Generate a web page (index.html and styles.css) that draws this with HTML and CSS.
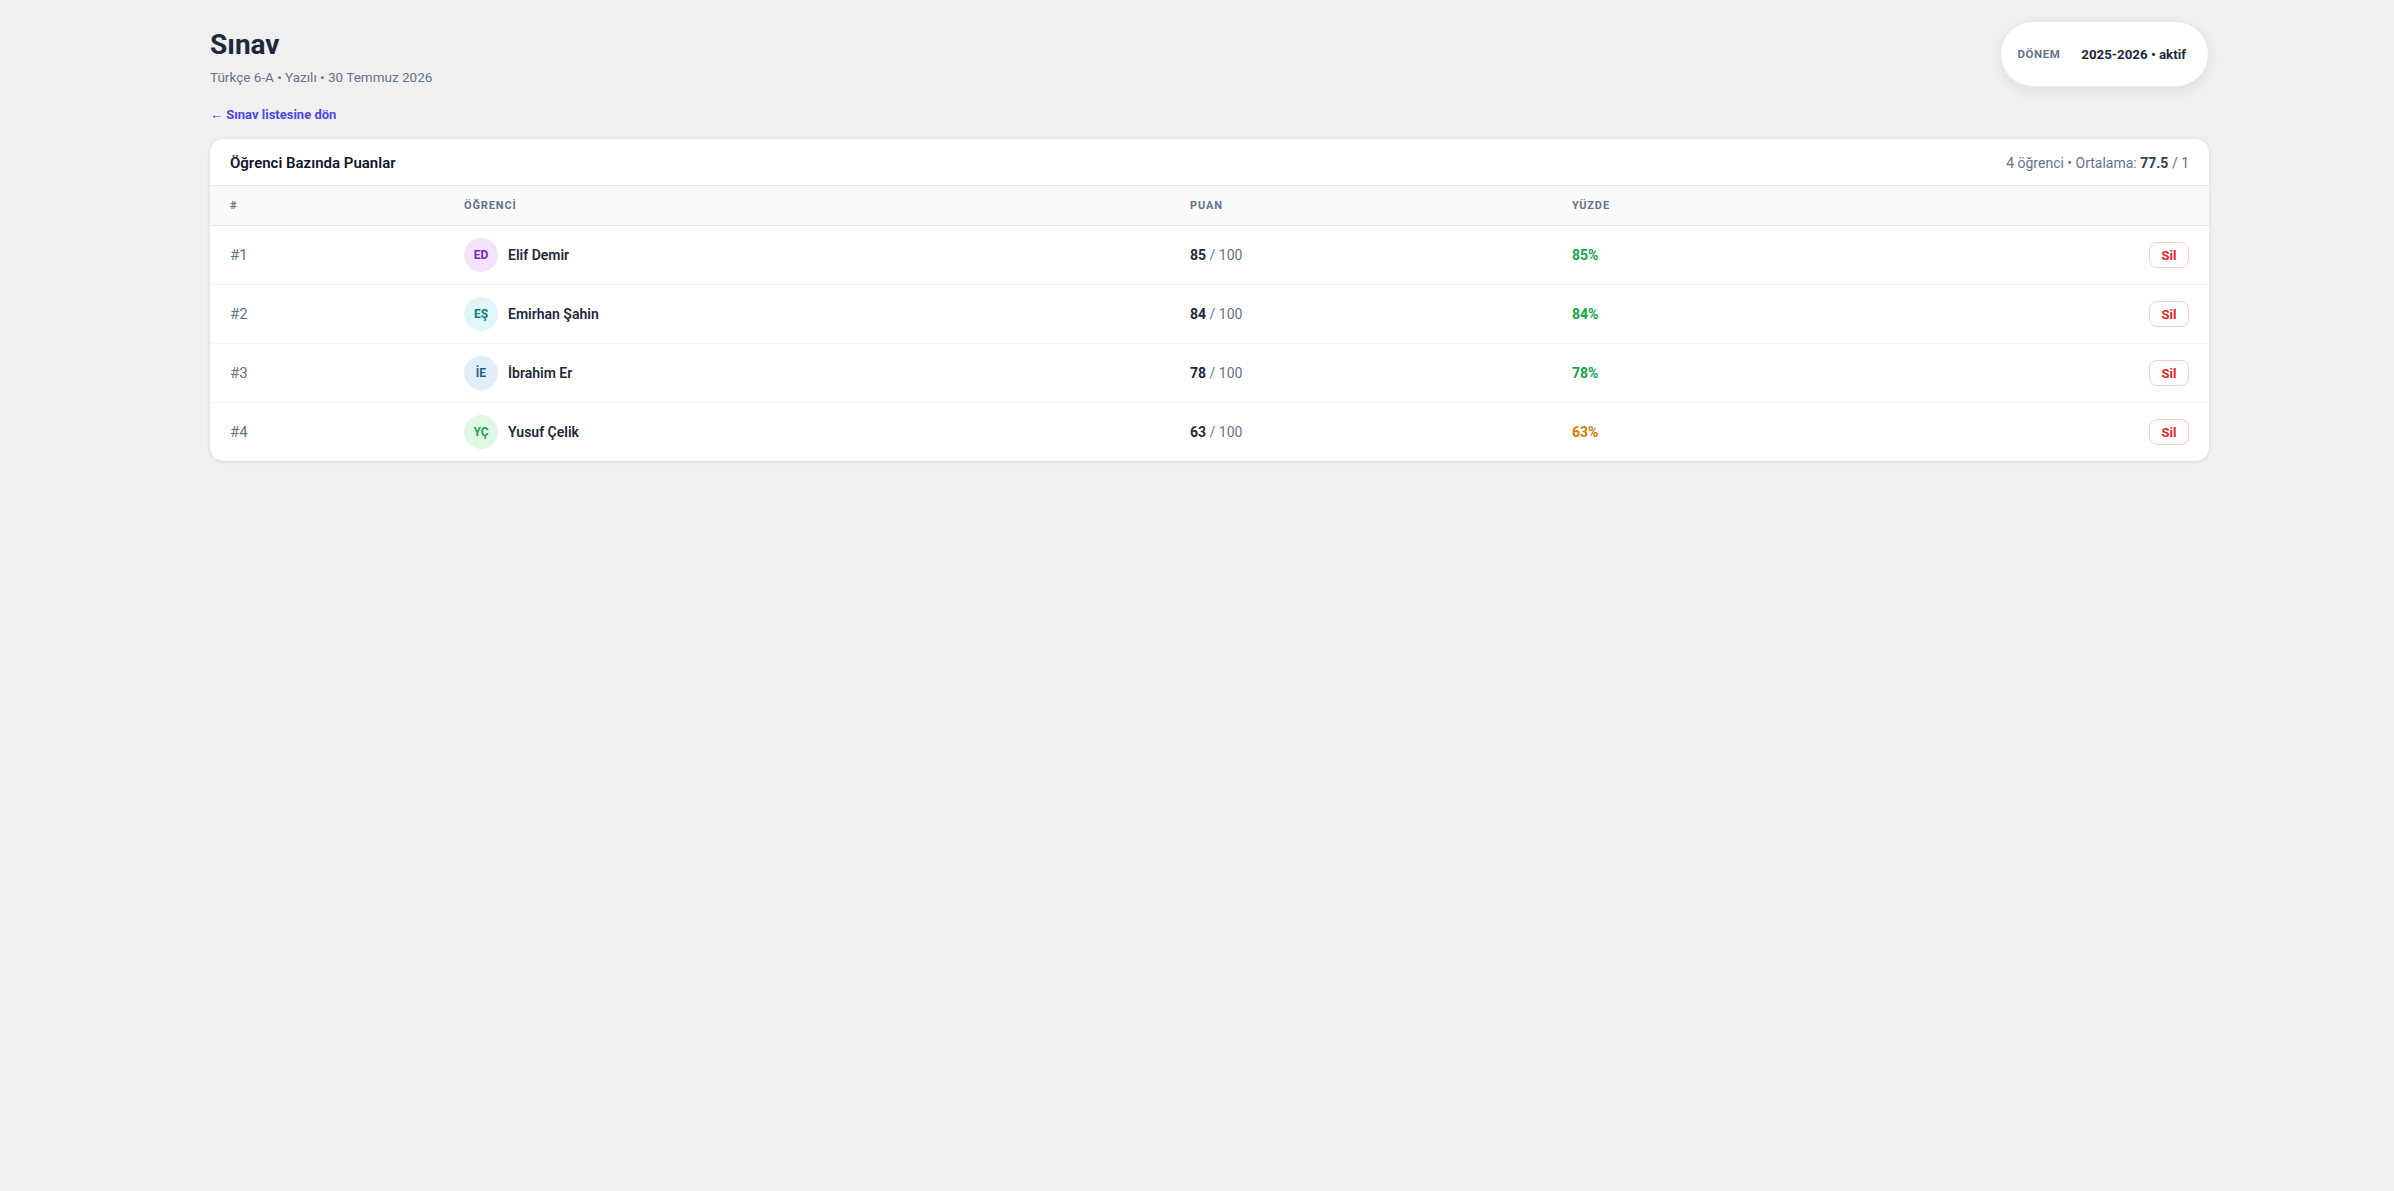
FILE: index.html
```html
<!DOCTYPE html>
<html lang="tr">
<head>
    <meta charset="UTF-8">
    <meta name="viewport" content="width=device-width, initial-scale=1.0">
    <title>Sınav</title>
    <link rel="stylesheet" href="styles.css">
</head>
<body>
    <div class="page">
        <div class="top">
            <div class="heading">
                <h1>Sınav</h1>
                <div class="sub">Türkçe 6-A • Yazılı • 30 Temmuz 2026</div>
            </div>
            <div class="term">
                <span class="term-label">DÖNEM</span>
                <span class="term-value">2025-2026 • aktif</span>
            </div>
        </div>

        <div class="back-wrap">
            <a href="#" class="back">← Sınav listesine dön</a>
        </div>

        <div class="card">
            <div class="card-head">
                <div class="card-title">Öğrenci Bazında Puanlar</div>
                <div class="card-meta">4 öğrenci • Ortalama: <b>77.5</b> / 1</div>
            </div>

            <div class="row thead">
                <div>#</div>
                <div>ÖĞRENCİ</div>
                <div>PUAN</div>
                <div>YÜZDE</div>
                <div></div>
            </div>

            <div class="row">
                <div class="rank">#1</div>
                <div class="student"><span class="avatar purple">ED</span><span class="name">Elif Demir</span></div>
                <div class="score"><b>85</b> / 100</div>
                <div class="pct good">85%</div>
                <div class="actions"><button class="del">Sil</button></div>
            </div>
            <div class="row">
                <div class="rank">#2</div>
                <div class="student"><span class="avatar cyan">EŞ</span><span class="name">Emirhan Şahin</span></div>
                <div class="score"><b>84</b> / 100</div>
                <div class="pct good">84%</div>
                <div class="actions"><button class="del">Sil</button></div>
            </div>
            <div class="row">
                <div class="rank">#3</div>
                <div class="student"><span class="avatar blue">İE</span><span class="name">İbrahim Er</span></div>
                <div class="score"><b>78</b> / 100</div>
                <div class="pct good">78%</div>
                <div class="actions"><button class="del">Sil</button></div>
            </div>
            <div class="row">
                <div class="rank">#4</div>
                <div class="student"><span class="avatar green">YÇ</span><span class="name">Yusuf Çelik</span></div>
                <div class="score"><b>63</b> / 100</div>
                <div class="pct warn">63%</div>
                <div class="actions"><button class="del">Sil</button></div>
            </div>
        </div>
    </div>
</body>
</html>
```

FILE: styles.css
```css
body {
    margin: 0;
    padding: 0;
    font-family: Roboto, 'Liberation Sans', sans-serif;
    background-color: #f0f0f0;
    color: #1e293b;
}
.page {
    padding: 21px 185px 40px 210px;
}
.top {
    display: flex;
    justify-content: space-between;
    align-items: flex-start;
}
.heading {
    margin-top: 7px;
}
h1 {
    margin: 0;
    font-size: 28px;
    line-height: 34px;
    font-weight: 700;
    color: #1e293b;
}
.sub {
    margin-top: 5px;
    font-size: 13.5px;
    line-height: 20px;
    color: #64748b;
}
.term {
    display: flex;
    align-items: center;
    gap: 21px;
    height: 64px;
    padding: 0 22px 0 16px;
    background: #fff;
    border: 1px solid #e5e9f0;
    border-radius: 33px;
    box-shadow: 0 4px 14px rgba(15, 23, 42, 0.08);
}
.term-label {
    font-size: 11.5px;
    font-weight: 700;
    letter-spacing: 0.05em;
    color: #64748b;
}
.term-value {
    font-size: 13.3px;
    font-weight: 700;
    color: #1e293b;
}
.back-wrap {
    margin-top: 18px;
    line-height: 18px;
}
.back {
    font-size: 13px;
    font-weight: 700;
    color: #4f46e5;
    text-decoration: none;
}
.card {
    margin-top: 15px;
    background: #fff;
    border-radius: 14px;
    box-shadow: 0 1px 4px rgba(15, 23, 42, 0.10);
    overflow: hidden;
}
.card-head {
    display: flex;
    justify-content: space-between;
    align-items: center;
    padding: 15px 20px 13px;
    line-height: 18px;
    border-bottom: 1px solid #e2e8f0;
}
.card-title {
    font-size: 15px;
    font-weight: 600;
    color: #0f172a;
}
.card-meta {
    font-size: 14px;
    color: #64748b;
}
.card-meta b {
    color: #334155;
    font-weight: 700;
}
.row {
    display: grid;
    grid-template-columns: 234px 726px 382px 1fr auto;
    align-items: center;
    padding: 12px 20px;
    border-bottom: 1px solid #f1f5f9;
}
.row > div {
    padding-right: 20px;
}
.row > div:last-child {
    padding-right: 0;
}
.row:last-child {
    border-bottom: none;
}
.thead {
    background: #f8fafc;
    border-bottom: 1px solid #e2e8f0;
    font-size: 11px;
    line-height: 15px;
    font-weight: 700;
    letter-spacing: 0.08em;
    color: #64748b;
}
.rank {
    font-size: 15px;
    color: #64748b;
}
.student {
    display: flex;
    align-items: center;
    gap: 10px;
}
.avatar {
    display: flex;
    align-items: center;
    justify-content: center;
    width: 34px;
    height: 34px;
    border-radius: 50%;
    font-size: 12px;
    font-weight: 700;
}
.purple { background: #f1e4fb; color: #7e22ce; }
.cyan { background: #e0f6f8; color: #0f7c80; }
.blue { background: #e1edf8; color: #1f5f93; }
.green { background: #e0f7e5; color: #16a34a; }
.name {
    font-size: 14px;
    font-weight: 600;
    color: #1e293b;
}
.score {
    font-size: 14px;
    color: #64748b;
}
.score b {
    color: #1e293b;
    font-weight: 700;
}
.pct {
    font-size: 14px;
    font-weight: 700;
}
.good { color: #16a34a; }
.warn { color: #d97706; }
.actions {
    display: flex;
    justify-content: flex-end;
}
.del {
    width: 40px;
    height: 26px;
    padding: 0;
    background: #fff;
    border: 1px solid #fecaca;
    border-radius: 8px;
    font-family: inherit;
    font-size: 13px;
    font-weight: 700;
    color: #dc2626;
    cursor: pointer;
}
```
